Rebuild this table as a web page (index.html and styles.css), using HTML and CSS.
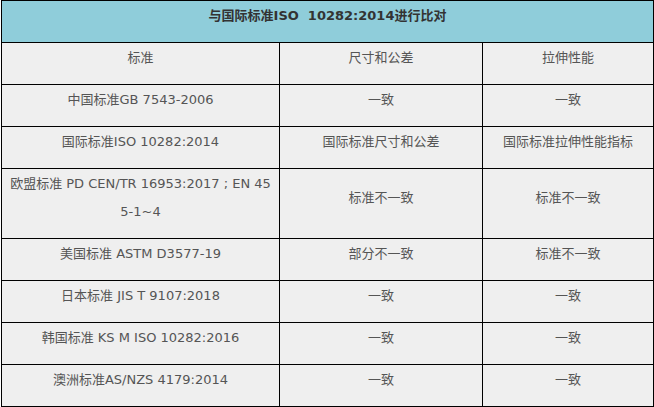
FILE: index.html
```html
<!DOCTYPE html>
<html lang="zh">
<head>
<meta charset="utf-8">
<title>与国际标准ISO 10282:2014进行比对</title>
<link rel="stylesheet" href="styles.css">
</head>
<body>
<div class="wrap">
<table class="cmp">
  <colgroup>
    <col class="c1"><col class="c2"><col class="c3">
  </colgroup>
  <thead>
    <tr><th colspan="3" class="title">与国际标准ISO&nbsp; 10282:2014进行比对</th></tr>
  </thead>
  <tbody>
    <tr><td>标准</td><td>尺寸和公差</td><td>拉伸性能</td></tr>
    <tr><td>中国标准GB 7543-2006</td><td>一致</td><td>一致</td></tr>
    <tr><td>国际标准ISO 10282:2014</td><td>国际标准尺寸和公差</td><td>国际标准拉伸性能指标</td></tr>
    <tr><td class="wrapcell">欧盟标准 PD CEN/TR 16953:2017 ; EN 455-1~4</td><td>标准不一致</td><td>标准不一致</td></tr>
    <tr><td>美国标准 ASTM D3577-19</td><td>部分不一致</td><td>标准不一致</td></tr>
    <tr><td>日本标准 JIS T 9107:2018</td><td>一致</td><td>一致</td></tr>
    <tr><td>韩国标准 KS M ISO 10282:2016</td><td>一致</td><td>一致</td></tr>
    <tr><td>澳洲标准AS/NZS 4179:2014</td><td>一致</td><td>一致</td></tr>
  </tbody>
</table>
</div>
</body>
</html>
```

FILE: styles.css
```css
html, body {
  margin: 0;
  padding: 0;
  background: #ffffff;
}
.wrap {
  padding: 0 1px;
}
.cmp {
  width: 652px;
  border-collapse: collapse;
  table-layout: fixed;
  font-family: "DejaVu Sans", "Noto Sans CJK SC", sans-serif;
  font-size: 13px;
  color: #555555;
}
.c1 { width: 278px; }
.c2 { width: 203px; }
.c3 { width: 171px; }
.cmp th,
.cmp td {
  border: 1px solid #000000;
  background: #efefef;
  text-align: center;
  vertical-align: middle;
  line-height: 28px;
  padding: 1px 7px 12px;
}
.cmp th.title {
  background: #8fcdda;
  color: #333333;
  font-weight: bold;
}
.cmp td.wrapcell {
  word-break: break-all;
}
```
